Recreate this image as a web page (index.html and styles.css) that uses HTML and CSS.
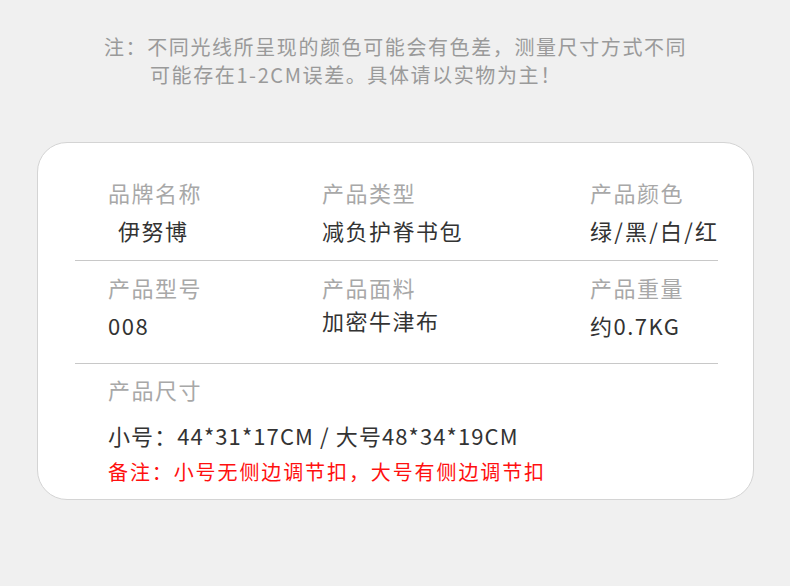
FILE: index.html
```html
<!DOCTYPE html>
<html lang="zh">
<head>
<meta charset="utf-8">
<link rel="stylesheet" href="styles.css">
</head>
<body>
<div class="note">
  <div class="note-line">注：不同光线所呈现的颜色可能会有色差，测量尺寸方式不同</div>
  <div class="note-line indent">可能存在1-2CM误差。具体请以实物为主！</div>
</div>
<div class="card">
  <div class="row row1">
    <div class="cell"><div class="label">品牌名称</div><div class="value brand">伊努博</div></div>
    <div class="cell"><div class="label">产品类型</div><div class="value">减负护脊书包</div></div>
    <div class="cell"><div class="label">产品颜色</div><div class="value colors">绿/黑/白/红</div></div>
  </div>
  <div class="row row2">
    <div class="cell"><div class="label">产品型号</div><div class="value">008</div></div>
    <div class="cell"><div class="label">产品面料</div><div class="value up">加密牛津布</div></div>
    <div class="cell"><div class="label">产品重量</div><div class="value">约0.7KG</div></div>
  </div>
  <div class="row3">
    <div class="label">产品尺寸</div>
    <div class="value size">小号：44*31*17CM / 大号48*34*19CM</div>
    <div class="remark">备注：小号无侧边调节扣，大号有侧边调节扣</div>
  </div>
</div>
</body>
</html>
```
FILE: styles.css
```css
html, body {
  margin: 0;
  padding: 0;
  background: #f0f0f0;
}
body {
  width: 790px;
  height: 586px;
  font-family: "Noto Sans CJK SC", "Noto Sans", sans-serif;
}
.note {
  padding: 33px 0 0 104px;
  color: #9a9a9a;
  font-size: 20px;
  line-height: 28px;
  letter-spacing: 1.6px;
}
.note-line.indent {
  margin-left: 46px;
}
.card {
  margin: 53px 0 0 37px;
  background: #fff;
  border: 1px solid #d4d4d4;
  border-radius: 30px;
  padding: 0 35px 0 37px;
  box-sizing: border-box;
  width: 717px;
  height: 358px;
}
.row {
  display: grid;
  grid-template-columns: 214px 268px 1fr;
  padding-left: 33px;
  border-bottom: 1px solid #c8c8c8;
}
.row1 {
  padding-top: 34px;
  padding-bottom: 15px;
}
.row2 {
  padding-top: 11px;
  padding-bottom: 23px;
}
.label {
  color: #a8a8a8;
  font-size: 22px;
  line-height: 30px;
  letter-spacing: 1.5px;
  white-space: nowrap;
}
.value {
  color: #333;
  font-size: 22px;
  line-height: 30px;
  margin-top: 8px;
  letter-spacing: 1.5px;
  white-space: nowrap;
}
.value.colors {
  letter-spacing: 2.2px;
}
.row2 .value {
  margin-top: 8px;
}
.row2 .value.up {
  margin-top: 3px;
}
.brand {
  padding-left: 10px;
}
.row3 {
  padding: 10px 0 0 33px;
}
.size {
  margin-top: 16px;
  letter-spacing: 1.1px;
}
.remark {
  margin-top: 8px;
  color: #ff1010;
  font-size: 20px;
  line-height: 28px;
  letter-spacing: 1.9px;
  white-space: nowrap;
}
```
